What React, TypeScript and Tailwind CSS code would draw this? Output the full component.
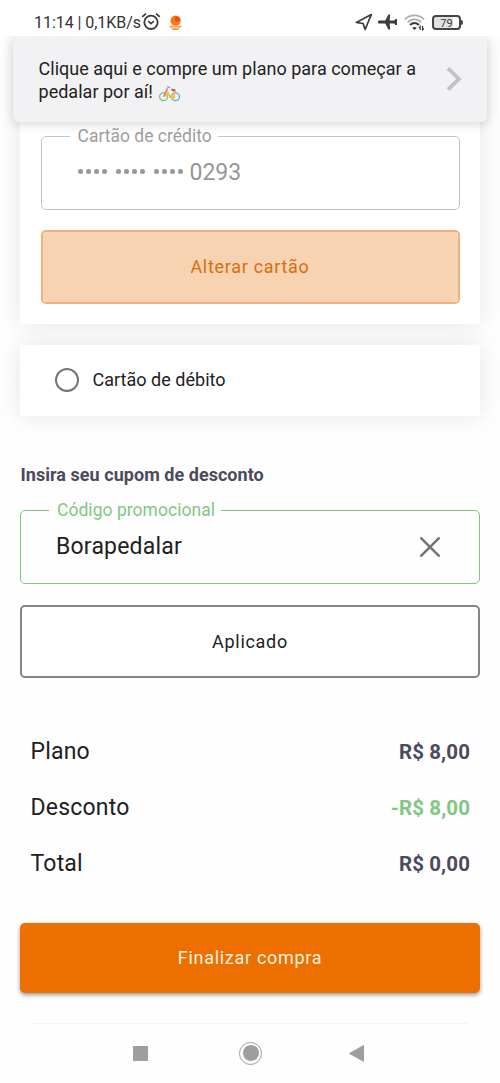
import type { ReactNode } from "react";

function StatusBar() {
  return (
    <header className="relative z-20 flex h-9 items-center bg-white pl-[34px] pr-[37px] pt-2 text-[#3c3c3c]">
      <span className="w-[107px] whitespace-nowrap pt-px text-[16px] leading-5 tracking-[-0.050px] text-[#333333]">
        11:14 | 0,1KB/s
      </span>
      <svg className="h-5 w-5" viewBox="0 0 20 20" fill="none" stroke="currentColor">
        <circle cx="10" cy="10.3" r="6.7" strokeWidth="1.8" />
        <path d="M7.2 9.2 10 11.6l2.8-2.4" strokeWidth="1.6" />
        <path d="M1.2 4.9 5 1.6M18.8 4.9 15 1.6" strokeWidth="1.7" />
      </svg>
      <svg className="ml-2 mt-px h-4 w-[13px]" viewBox="0 0 13 16">
        <circle cx="6.6" cy="5.6" r="5.2" fill="#f87a1b" />
        <circle cx="8.2" cy="4" r="2.6" fill="#f04c12" />
        <path d="M0 10.7h4q2.600 1.200 5 0h4L11.600 12.400H1.400zM2 13.200h9l-2 1.800H4z" fill="#f39a3a" />
      </svg>
      <div className="ml-auto flex items-center">
        <svg className="h-[18px] w-[18px]" viewBox="0 0 18 18" fill="none" stroke="currentColor" strokeWidth="1.700" strokeLinejoin="round">
          <path d="M16.300 1.600 1.300 9.400l6.800 1.100 2 6z" />
        </svg>
        <svg className="ml-[5px] h-[18px] w-[19px]" viewBox="0 0 19 18" fill="currentColor">
          <path d="M0 8.400q0-.8 1-.8h6.300L10.400 1.500h1.800l-.6 6.100h4.600l1.300-1.700H19v6.200h-1.500l-1.300-1.700h-4.600l.6 6.100h-1.800L7.300 10.400H1q-1 0-1-.8z" />
        </svg>
        <svg className="ml-[7px] h-[18px] w-[21px]" viewBox="0 0 21 18" fill="none">
          <path d="M.9 6.400C6 1 15 1 20.100 6.400M3.700 9.300C7.500 5.400 13.500 5.400 17.300 9.300" stroke="#b0b0b0" strokeWidth="1.900" />
          <path d="M6 12c2.600-2.400 6.400-2.400 9 0" stroke="currentColor" strokeWidth="2.200" />
          <path d="m8.100 14.700 2.400 2.300 2.400-2.300c-1.400-1.100-3.400-1.100-4.800 0z" fill="currentColor" />
          <path d="M16.200 17v-3.500l-1.300 1.300M18.600 13v3.800l1.300-1.300" stroke="currentColor" strokeWidth="1.200" />
        </svg>
        <div className="ml-[7px] flex items-center">
          <span className="flex h-[15px] w-[29px] items-center justify-center rounded-[4px] border-2 border-[#454545] bg-[linear-gradient(90deg,#e2e2e2_76%,#ffffff_76%)] pt-[2px] text-[11px] leading-none">
            79
          </span>
          <span className="h-[5px] w-[2px] rounded-r-sm bg-[#454545]" />
        </div>
      </div>
    </header>
  );
}

function Bicycle() {
  return (
    <svg className="ml-[6px] inline-block h-4 w-[21px] align-[-4px]" viewBox="0 0 21 16" fill="none">
      <circle cx="4.500" cy="10.800" r="3.900" stroke="#7fb892" strokeWidth="1.300" />
      <circle cx="16.500" cy="10.800" r="3.900" stroke="#65add0" strokeWidth="1.300" />
      <path d="M5.500 10.500 8.500 5.500l2.500 6h4.500L14.500 5.500M8.500 8l4 3" stroke="#edc03f" strokeWidth="1.600" />
      <path d="M4.500 10.800 8.500 2" stroke="#e9775c" strokeWidth="1.300" />
      <path d="M8 1.200c1-1 2 .2 3 .8" stroke="#5aa6cb" strokeWidth="1.200" />
      <path d="m12.500 3.500 4 1.200" stroke="#df4b3d" strokeWidth="2" />
    </svg>
  );
}

function Banner() {
  return (
    <div className="absolute inset-x-[13px] top-9 z-10 flex h-[86px] items-start rounded-md bg-[#f2f2f5] pl-[25.500px] pt-[20.500px] shadow-[0_2px_12px_rgba(0,0,0,0.17)]">
      <p className="w-[400px] text-[18px] leading-[23.500px] tracking-[0.020px] text-[#222222]">
        Clique aqui e compre um plano para começar a
        <br />
        pedalar por aí!
        <Bicycle />
      </p>
      <svg className="ml-[7px] mt-[9.500px] h-[26px] w-4" viewBox="0 0 16 26" fill="none" stroke="#c2c2c4" strokeWidth="3.800">
        <path d="M2 2.300 12.900 13 2 23.700" />
      </svg>
    </div>
  );
}

function SummaryRow({ label, children, discount }: { label: string; children: ReactNode; discount?: boolean }) {
  return (
    <div className="flex h-14 items-center justify-between">
      <dt className="text-[23px] tracking-[0.200px] text-[#212121]">{label}</dt>
      <dd className={discount ? "text-[20.500px] font-bold tracking-[0.100px] text-[#81c784]" : "text-[20.500px] font-bold tracking-[0.100px] text-[#4d4a5c]"}>
        {children}
      </dd>
    </div>
  );
}

function NavBar() {
  return (
    <nav className="mt-[17px] flex h-6 items-center text-[#9e9e9e]">
      <span className="ml-[133px] h-[15px] w-[15px] bg-[#9e9e9e]" />
      <span className="ml-[91px] flex h-[23px] w-[23px] items-center justify-center rounded-full border border-[#9e9e9e]">
        <span className="h-4 w-4 rounded-full bg-[#9e9e9e]" />
      </span>
      <svg className="ml-[87px] h-[17px] w-[15px]" viewBox="0 0 15 17" fill="currentColor">
        <path d="M15 .8v15.400q0 1-.9.400L.5 9.100Q-.4 8.500.5 7.900L14.100.3q.9-.500.900.500z" />
      </svg>
    </nav>
  );
}

export default function App() {
  return (
    <div className="relative h-[1083px] w-[500px] overflow-hidden bg-[#fefefe] font-[Roboto,sans-serif]">
      <StatusBar />
      <Banner />
      <main className="px-5">
        <section className="h-72 bg-white px-[20.500px] pt-[90px] shadow-[0_0_24px_rgba(0,0,0,0.1)]">
          <fieldset className="h-[84px] rounded-[5px] border border-[#c4c4c4] pl-[36px]">
            <legend className="-ml-[8px] h-5 pl-2 pr-[6px] text-[17.500px] leading-5 text-[#9e9e9e]">
              Cartão de crédito
            </legend>
            <div className="mt-[9px] flex h-9 items-center text-[23px] text-[#979797]">
              <span className="-mt-[3px] mr-[7px] flex gap-[9px]">
                {[0, 1, 2].map((group) => (
                  <span key={group} className="flex gap-[3px]">
                    {[0, 1, 2, 3].map((dot) => (
                      <span key={dot} className="h-[5px] w-[5px] rounded-full bg-[#979797]" />
                    ))}
                  </span>
                ))}
              </span>
              0293
            </div>
          </fieldset>
          <button className="mt-5 flex h-[74px] w-full rounded-[5px] border-2 border-[#eeb180] bg-[#fdebdb] text-[18px] tracking-[0.700px] text-[#dc6d0c]">
            <span className="flex h-full w-full items-center justify-center rounded-[5px] bg-[#f8d3b2] pb-px">
              Alterar cartão
            </span>
          </button>
        </section>

        <section className="mt-[21px] flex h-[71px] items-center rounded-[3px] bg-white pb-px pl-[34.500px] shadow-[0_0_24px_rgba(0,0,0,0.1)]">
          <span className="h-6 w-6 rounded-full border-2 border-[#757575]" />
          <span className="ml-[14px] pb-px text-[18px] tracking-[0.020px] text-[#212121]">Cartão de débito</span>
        </section>

        <h2 className="ml-[0.500px] mt-[47px] text-[18px] font-bold leading-6 tracking-[0.040px] text-[#4d4a5c]">
          Insira seu cupom de desconto
        </h2>

        <fieldset className="mt-[13px] h-[84px] rounded-[5px] border border-[#81c784] pl-[35px] pr-[39px]">
          <legend className="-ml-[7px] h-5 pl-2 pr-[6px] text-[17.500px] leading-5 tracking-[0.040px] text-[#81c784]">
            Código promocional
          </legend>
          <div className="mt-[9px] flex h-9 items-center justify-between text-[23px] tracking-[0.200px] text-[#212121]">
            Borapedalar
            <svg className="h-5 w-5" viewBox="0 0 20 20" stroke="#757575" strokeWidth="2.600" strokeLinecap="round">
              <path d="m1.300 1.300 17.400 17.400M18.700 1.300 1.300 18.700" />
            </svg>
          </div>
        </fieldset>

        <button className="mt-[21px] flex h-[73px] w-full items-center justify-center rounded-[5px] border-2 border-[#858585] bg-white text-[18px] tracking-[0.700px] text-[#212121]">
          Aplicado
        </button>

        <dl className="mt-[46px] pl-[10.500px] pr-[10px]">
          <SummaryRow label="Plano">R$ 8,00</SummaryRow>
          <SummaryRow label="Desconto" discount>-R$ 8,00</SummaryRow>
          <SummaryRow label="Total">R$ 0,00</SummaryRow>
        </dl>

        <button className="mt-[31px] flex h-[70px] w-full items-center justify-center rounded-[5px] bg-[#ec6f00] pb-[2px] text-[18px] tracking-[0.700px] text-[#fff3e0] shadow-[0_2px_4px_rgba(0,0,0,0.4)]">
          Finalizar compra
        </button>
        <hr className="mx-3 mt-[30px] border-[#f4f4f4]" />
      </main>
      <NavBar />
    </div>
  );
}
